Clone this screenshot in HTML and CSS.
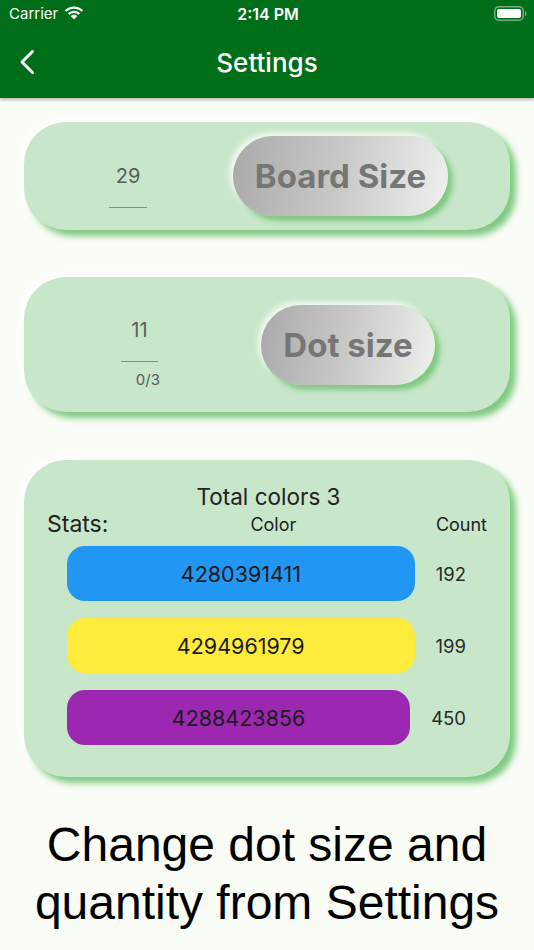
FILE: index.html
```html
<!DOCTYPE html>
<html lang="en">
<head>
    <meta charset="UTF-8">
    <meta name="viewport" content="width=device-width, initial-scale=1.0">
    <title>Settings</title>
    <link rel="stylesheet" href="styles.css">
</head>
<body>
    <div class="top">
        <div class="status-bar">
            <div class="status-left">
                <span>Carrier</span>
                <svg class="wifi" width="20" height="15" viewBox="0 0 20 15">
                    <path d="M10 14.5 L6.6 11 A5 5 0 0 1 13.4 11 Z" fill="#fff"/>
                    <path d="M3.8 8.2 A8.8 8.8 0 0 1 16.2 8.2 L14.6 9.8 A6.6 6.6 0 0 0 5.4 9.8 Z" fill="#fff"/>
                    <path d="M0.8 5.2 A13 13 0 0 1 19.2 5.2 L17.6 6.8 A10.8 10.8 0 0 0 2.4 6.8 Z" fill="#fff"/>
                </svg>
            </div>
            <div class="status-time">2:14 PM</div>
            <div class="status-right">
                <svg width="33" height="15" viewBox="0 0 33 15">
                    <rect x="0.75" y="0.75" width="28.5" height="13.5" rx="4" fill="none" stroke="#fff" stroke-opacity="0.45" stroke-width="1.5"/>
                    <rect x="3" y="3" width="24" height="9" rx="2" fill="#fff"/>
                    <path d="M31 5 Q32.5 5 32.5 7.5 Q32.5 10 31 10 Z" fill="#fff" fill-opacity="0.45"/>
                </svg>
            </div>
        </div>
        <div class="app-bar">
            <svg class="back" width="18" height="26" viewBox="0 0 18 26">
                <path d="M14.5 2.5 L4 13 L14.5 23.5" fill="none" stroke="#fff" stroke-width="3" stroke-linecap="round" stroke-linejoin="round"/>
            </svg>
            <div class="title">Settings</div>
        </div>
    </div>

    <div class="content">
        <div class="card card-board">
            <div class="field">
                <div class="field-value">29</div>
                <div class="field-line"></div>
            </div>
            <button class="pill-btn">Board Size</button>
        </div>

        <div class="card card-dot">
            <div class="field">
                <div class="field-value">11</div>
                <div class="field-line"></div>
                <div class="field-counter">0/3</div>
            </div>
            <button class="pill-btn">Dot size</button>
        </div>

        <div class="card card-stats">
            <div class="stats-title">Total colors 3</div>
            <div class="stats-head">
                <span class="stats-label">Stats:</span>
                <span class="head-color">Color</span>
                <span class="head-count">Count</span>
            </div>
            <div class="color-list">
                <div class="color-row">
                    <div class="color-bar blue">4280391411</div>
                    <span class="count">192</span>
                </div>
                <div class="color-row">
                    <div class="color-bar yellow">4294961979</div>
                    <span class="count">199</span>
                </div>
                <div class="color-row">
                    <div class="color-bar purple">4288423856</div>
                    <span class="count">450</span>
                </div>
            </div>
        </div>

        <div class="caption">Change dot size and<br>quantity from Settings</div>
    </div>
</body>
</html>
```

FILE: styles.css
```css
:root {
    --green-dark: #006d18;
    --card-bg: #c8e6c9;
    --card-shadow: #7fca82;
    --background: #fafcf6;
    --text-dark: #222222;
}

* {
    margin: 0;
    padding: 0;
    box-sizing: border-box;
    font-family: Inter, Roboto, sans-serif;
}

body {
    background: var(--background);
    width: 534px;
    min-height: 950px;
}

.top {
    background: var(--green-dark);
    color: #fff;
    box-shadow: 0 2px 3px rgba(0, 0, 0, 0.25);
}

.status-bar {
    height: 27px;
    display: flex;
    align-items: center;
    justify-content: space-between;
    padding: 0 7px 0 9px;
    font-size: 15px;
}

.status-left {
    display: flex;
    align-items: center;
    gap: 6px;
    width: 120px;
}

.wifi {
    margin-top: -3px;
}

.status-time {
    font-size: 16px;
    font-weight: 600;
}

.status-right {
    width: 120px;
    display: flex;
    justify-content: flex-end;
}

.app-bar {
    height: 71px;
    display: flex;
    align-items: center;
    justify-content: center;
    position: relative;
}

.back {
    position: absolute;
    left: 18px;
    top: 22px;
}

.title {
    font-size: 26px;
    font-weight: 500;
}

.content {
    padding: 24px 24px 0;
}

.card {
    background: var(--card-bg);
    border-radius: 42px;
    box-shadow: 6px 6px 6px var(--card-shadow), -4px -4px 8px rgba(255, 255, 255, 0.9);
}

.card-board,
.card-dot {
    display: flex;
    align-items: center;
}

.card-board {
    height: 108px;
    margin-bottom: 47px;
}

.card-dot {
    height: 135px;
    margin-bottom: 48px;
}

.field {
    align-self: flex-start;
    margin-top: 42px;
    display: flex;
    flex-direction: column;
    align-items: center;
    color: #5c5c5c;
}

.card-board .field {
    margin-left: 85px;
    width: 38px;
}

.card-dot .field {
    margin-left: 97px;
    margin-top: 41px;
    width: 37px;
}

.field-value {
    font-size: 20px;
    line-height: 24px;
    text-align: center;
}

.field-line {
    width: 100%;
    height: 1px;
    background: #7d907d;
    margin-top: 19px;
}

.field-counter {
    font-size: 15px;
    line-height: 18px;
    align-self: flex-end;
    margin-top: 9px;
    margin-right: -2px;
}

.pill-btn {
    height: 80px;
    border: none;
    border-radius: 40px;
    background: linear-gradient(100deg, #a9a9a9 0%, #c9cac8 50%, #eff1ee 100%);
    color: #767676;
    font-size: 33px;
    font-weight: 700;
    box-shadow: 5px 5px 5px var(--card-shadow), -3px -3px 6px rgba(255, 255, 255, 0.85);
}

.card-board .pill-btn {
    width: 215px;
    margin-left: 86px;
}

.card-dot .pill-btn {
    width: 174px;
    margin-left: 103px;
}

.card-stats {
    padding: 23px 44px 32px 43px;
    color: var(--text-dark);
}

.stats-title {
    text-align: center;
    font-size: 22.5px;
    line-height: 28px;
    margin-right: -4px;
}

.stats-head {
    display: flex;
    align-items: center;
    height: 26px;
    margin-left: -20px;
    margin-right: -21px;
}

.stats-label {
    font-size: 23px;
}

.head-color {
    font-size: 18px;
    margin-left: 142px;
}

.head-count {
    font-size: 18px;
    margin-left: auto;
}

.color-list {
    display: flex;
    flex-direction: column;
    gap: 17px;
    margin-top: 9px;
}

.color-row {
    display: flex;
    align-items: center;
    gap: 21px;
}

.color-bar {
    flex: 1;
    height: 55px;
    border-radius: 18px;
    display: flex;
    align-items: center;
    justify-content: center;
    font-size: 21.5px;
    color: #1c1c1c;
}

.blue {
    background: #2196f3;
}

.yellow {
    background: #ffeb3b;
}

.purple {
    background: #9c27b0;
}

.count {
    font-size: 18.5px;
    color: #2a2a2a;
}

.caption {
    margin-top: 39px;
    text-align: center;
    font-family: "Liberation Sans", Arial, sans-serif;
    font-size: 48px;
    line-height: 58px;
    color: #000;
}
```
